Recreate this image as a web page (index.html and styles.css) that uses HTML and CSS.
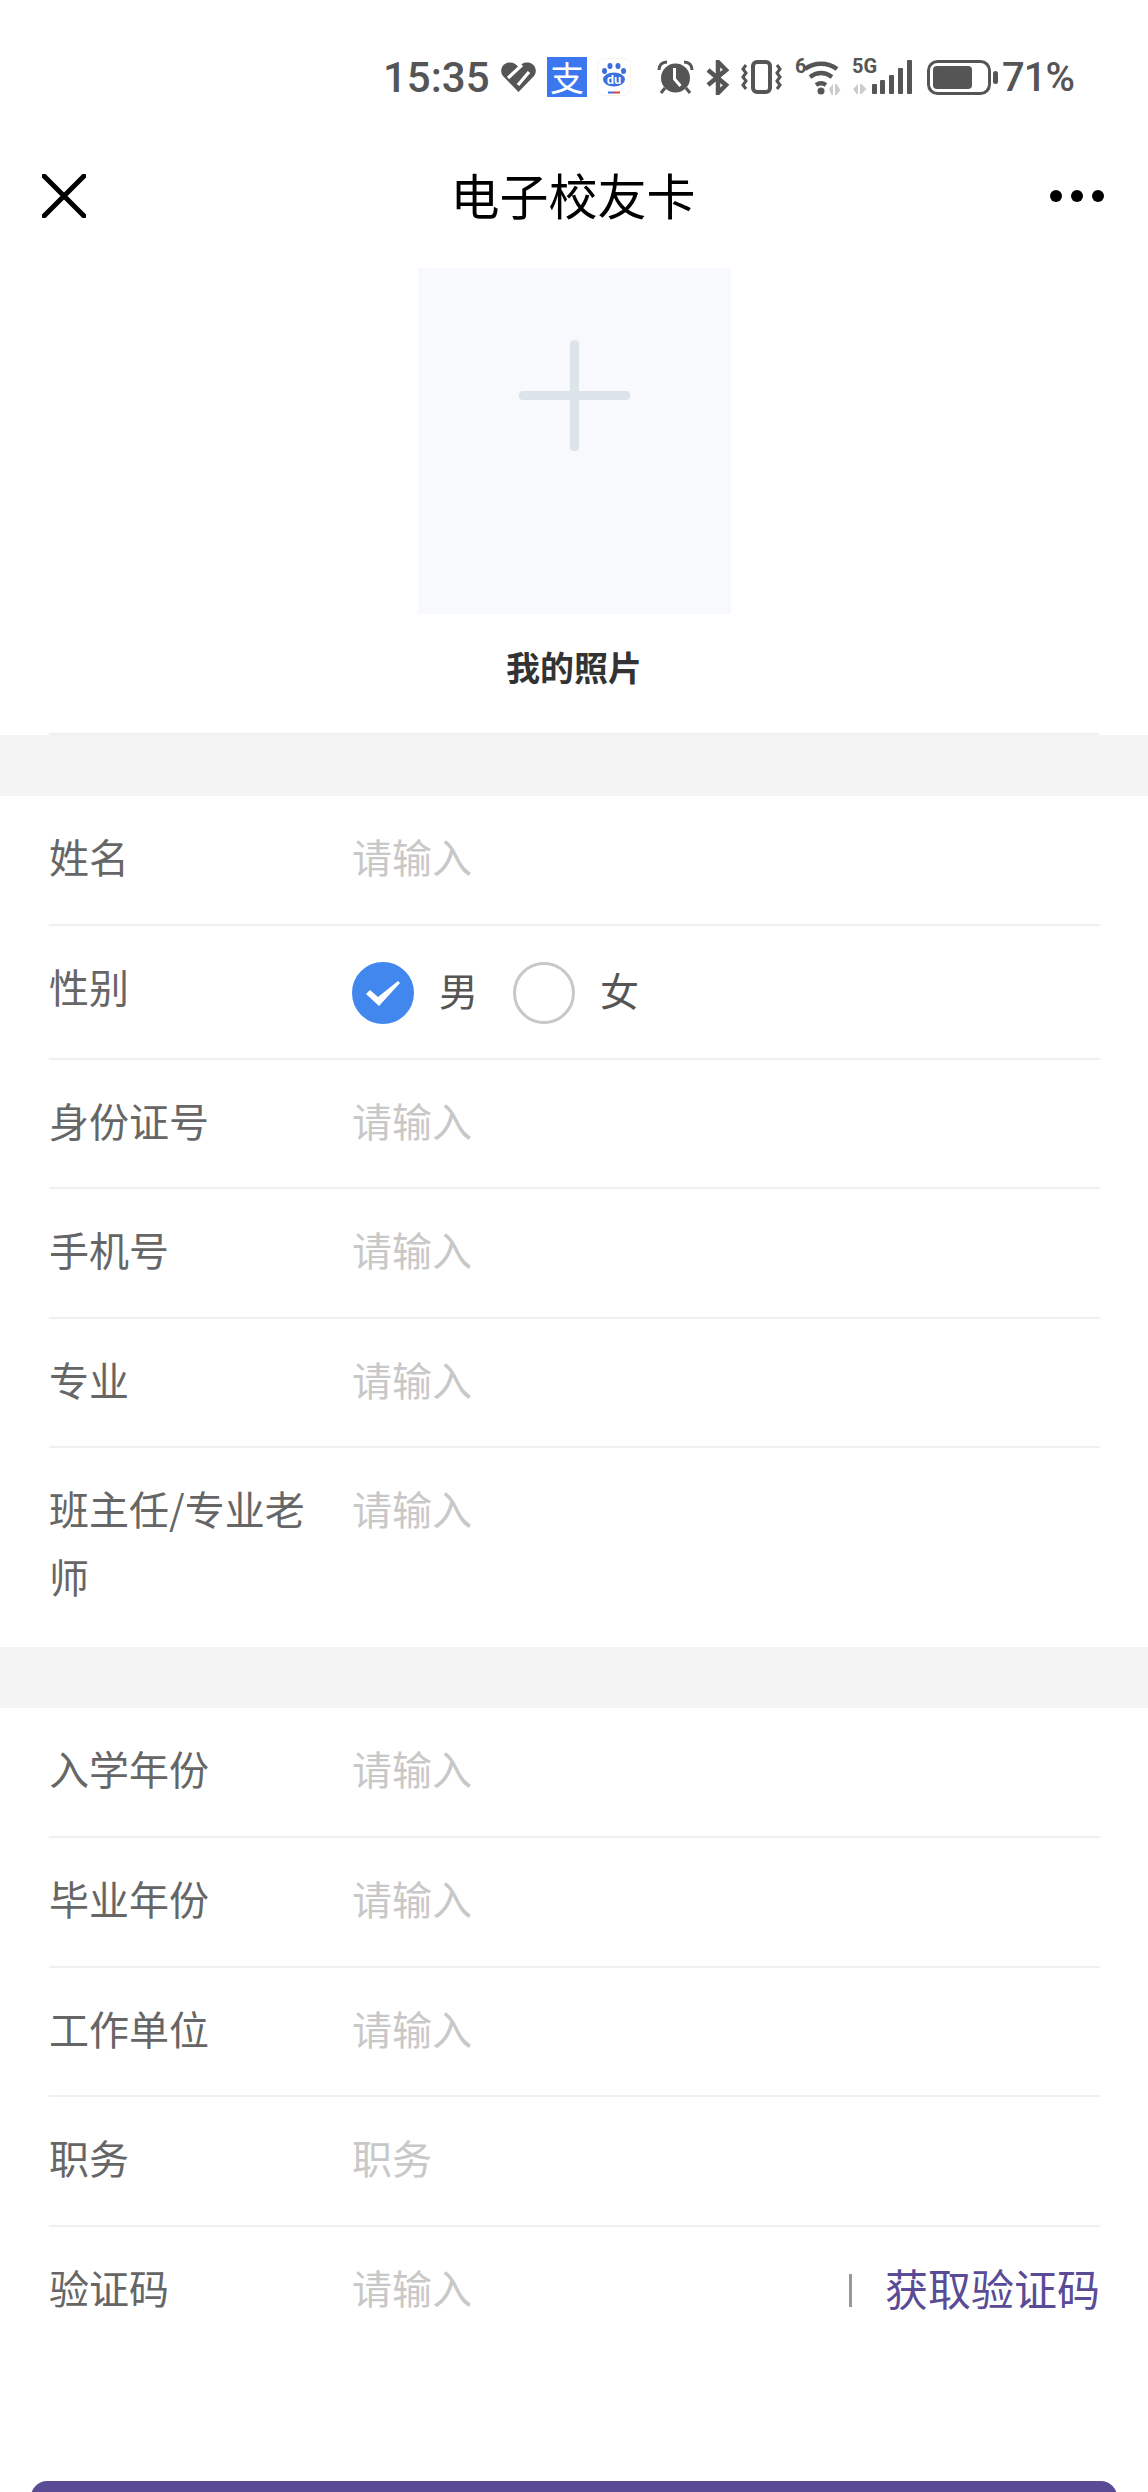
FILE: index.html
```html
<!DOCTYPE html>
<html lang="zh-CN">
<head>
    <meta charset="UTF-8">
    <meta name="viewport" content="width=device-width, initial-scale=1.0">
    <title>电子校友卡</title>
    <link rel="stylesheet" href="styles.css">
</head>
<body>
    <div class="status-bar">
        <span class="status-time">15:35</span>
        <svg class="ic-heart" width="35" height="30" viewBox="0 0 35 30"><path d="M17.500 30 2 14C-2 9 1 1 8 .5c4-.5 7 1.500 9.500 4.500C20 2 23 0 27 .5c7 .5 10 8.500 6 13.500Z" fill="#555"/><path d="M7 16 21 3M17 23 28 10" stroke="#fff" stroke-width="3.200" fill="none"/></svg>
        <span class="ic-alipay">支</span>
        <svg class="ic-baidu" width="34" height="38" viewBox="0 0 34 38"><rect x="0.500" y="0.500" width="33" height="37" rx="7" fill="#fff" stroke="#f7f3ea"/><g fill="#3b6fe0"><ellipse cx="17" cy="21.500" rx="11" ry="7"/><ellipse cx="7.500" cy="13" rx="2.500" ry="3"/><ellipse cx="13" cy="8" rx="2.500" ry="3"/><ellipse cx="21" cy="8" rx="2.500" ry="3"/><ellipse cx="26.500" cy="13" rx="2.500" ry="3"/></g><text x="17" y="26" class="baidu-du">du</text><rect x="11" y="33.500" width="6" height="2" fill="#3b6fe0"/><rect x="17" y="33.500" width="6" height="2" fill="#d8443c"/></svg>
        <svg class="ic-alarm" width="37" height="34" viewBox="0 0 37 34"><circle cx="18.500" cy="18" r="14.500" fill="#555"/><path d="M17.500 8v11l6 7" stroke="#fff" stroke-width="3" fill="none"/><path d="M2 10C2 5 5 2 10 2M35 10c0-5-3-8-8-8" fill="none" stroke="#555" stroke-width="3"/><path d="m8 28-4 5M29 28l4 5" stroke="#555" stroke-width="3"/></svg>
        <svg class="ic-bt" width="24" height="35" viewBox="0 0 24 35"><path d="M2 10 20 25l-8 8V2l8 8L2 25" fill="none" stroke="#555" stroke-width="4.500"/></svg>
        <svg class="ic-vibrate" width="41" height="34" viewBox="0 0 41 34"><rect x="12" y="2" width="17" height="30" rx="4" fill="none" stroke="#555" stroke-width="4"/><path d="M5 5 2 9l3 4-3 4 3 4-3 4 3 4M36 5l3 4-3 4 3 4-3 4 3 4-3 4" fill="none" stroke="#555" stroke-width="3"/></svg>
        <svg class="ic-wifi" width="48" height="50" viewBox="0 -6 48 50"><text x="0" y="15" class="net-label">6</text><path d="M10 11c9-7 23-7 32 0M15 19c7-5 15-5 22 0M21 27c3-2 7-2 10 0" fill="none" stroke="#555" stroke-width="4.500"/><circle cx="26" cy="33" r="3.500" fill="#555"/><path d="M34 31l4-5v11h-1.500zM40 26h1.500l4 6-4 5H40z" fill="#ccc"/></svg>
        <svg class="ic-signal" width="60" height="46" viewBox="0 -6 60 46"><text x="0" y="13" class="net-label">5G</text><path d="M1 29l5-5v10H4.500zM8 24h1.500l5 5-5 5H8z" fill="#ccc"/><g fill="#555"><rect x="20" y="24" width="5" height="10" rx="1"/><rect x="28" y="20" width="5" height="14" rx="1"/><rect x="37" y="15" width="5" height="19" rx="1"/><rect x="46" y="8" width="5" height="26" rx="1"/><rect x="55" y="0" width="5" height="34" rx="1"/></g></svg>
        <svg class="ic-battery" width="72" height="35" viewBox="0 0 72 35"><rect x="1.500" y="1.500" width="61" height="32" rx="9" fill="none" stroke="#555" stroke-width="3"/><rect x="6" y="6" width="39" height="23" rx="4" fill="#555"/><rect x="66" y="11" width="5" height="13" rx="2.500" fill="#555"/></svg>
        <span class="status-pct">71%</span>
    </div>

    <div class="nav">
        <svg class="nav-close" width="44" height="44" viewBox="0 0 44 44"><path d="M2 2 42 42M42 2 2 42" stroke="#000" stroke-width="5" stroke-linecap="round"/></svg>
        <h1 class="nav-title">电子校友卡</h1>
        <div class="nav-more"><i></i><i></i><i></i></div>
    </div>

    <div class="photo-section">
        <div class="photo-box">
            <svg class="plus" width="111" height="111" viewBox="0 0 111 111"><rect x="51" y="0" width="9" height="111" rx="4" fill="#dce3e9"/><rect x="0" y="51" width="111" height="9" rx="4" fill="#dce3e9"/></svg>
        </div>
        <p class="photo-label">我的照片</p>
    </div>

    <div class="form-group">
        <div class="row"><div class="label">姓名</div><div class="hint">请输入</div></div>
        <div class="row row-gender">
            <div class="label">性别</div>
            <div class="radios">
                <span class="radio checked">
                    <svg width="36" height="27" viewBox="0 0 36 27"><path d="M1 14l4-4 8 7L33 1l2 2-21 23z" fill="#fff"/></svg>
                </span>
                <span class="radio-text">男</span>
                <span class="radio"></span>
                <span class="radio-text">女</span>
            </div>
        </div>
        <div class="row"><div class="label">身份证号</div><div class="hint">请输入</div></div>
        <div class="row"><div class="label">手机号</div><div class="hint">请输入</div></div>
        <div class="row"><div class="label">专业</div><div class="hint">请输入</div></div>
        <div class="row row-last"><div class="label">班主任/专业老师</div><div class="hint">请输入</div></div>
    </div>

    <div class="form-group">
        <div class="row"><div class="label">入学年份</div><div class="hint">请输入</div></div>
        <div class="row"><div class="label">毕业年份</div><div class="hint">请输入</div></div>
        <div class="row"><div class="label">工作单位</div><div class="hint">请输入</div></div>
        <div class="row"><div class="label">职务</div><div class="hint">职务</div></div>
        <div class="row row-last">
            <div class="label">验证码</div>
            <div class="hint">请输入</div>
            <div class="get-code">获取验证码</div>
        </div>
    </div>

    <button class="submit" type="button"></button>
</body>
</html>
```

FILE: styles.css
```css
* {
    margin: 0;
    padding: 0;
    box-sizing: border-box;
}

html, body {
    height: 2492px;
    overflow: hidden;
}

body {
    font-family: "Noto Sans CJK SC", "Noto Sans", sans-serif;
    background-color: #fff;
    color: #666;
}

/* status bar */
.status-bar {
    height: 146px;
    padding: 8px 0 0 383px;
    display: flex;
    align-items: center;
    color: #555;
}

.status-time,
.status-pct {
    font-family: Roboto, sans-serif;
    font-size: 42px;
    font-weight: 500;
}

.status-time {
    width: 103px;
}

.status-pct {
    margin-left: 3px;
    font-size: 40px;
    letter-spacing: -1px;
}

.ic-heart { margin-left: 15px; }
.ic-baidu { margin-left: 10px; }
.ic-alarm { margin-left: 26px; }
.ic-bt { margin-left: 12px; }
.ic-vibrate { margin-left: 11px; }
.ic-wifi { margin-left: 13px; }
.ic-signal { margin-left: 9px; }
.ic-battery { margin-left: 15px; }

.ic-alipay {
    width: 40px;
    height: 40px;
    margin-left: 11px;
    background-color: #3b78f0;
    color: #fff;
    font-size: 34px;
    line-height: 40px;
    text-align: center;
}

.baidu-du {
    font-family: "Liberation Sans", sans-serif;
    font-size: 12px;
    font-weight: bold;
    fill: #fff;
    text-anchor: middle;
}

.net-label {
    font-family: Roboto, sans-serif;
    font-size: 20px;
    font-weight: 700;
    fill: #555;
}

/* nav */
.nav {
    height: 100px;
    padding: 0 44px 0 42px;
    display: grid;
    grid-template-columns: 1fr auto 1fr;
    align-items: center;
}

.nav-title {
    margin-bottom: 5px;
    font-size: 49px;
    font-weight: 400;
    color: #000;
}

.nav-more {
    display: flex;
    justify-content: flex-end;
    gap: 9px;
}

.nav-more i {
    width: 12px;
    height: 12px;
    border-radius: 50%;
    background-color: #000;
}

/* photo */
.photo-section {
    height: 489px;
    margin: 0 49px;
    padding-top: 22px;
    border-bottom: 2px solid #f0f0f0;
    text-align: center;
}

.photo-box {
    width: 313px;
    height: 346px;
    margin: 0 auto;
    padding-top: 72px;
    background-color: #f8f9fd;
}

.plus {
    display: block;
    margin: 0 auto;
}

.photo-label {
    margin-top: 29px;
    font-size: 34px;
    font-weight: 700;
    line-height: 48px;
    color: #333;
}

/* form */
.form-group {
    padding: 0 48px 0 49px;
    border-top: 61px solid #f4f4f4;
}

.row {
    display: flex;
    padding: 26px 0 33.6px;
    border-bottom: 2px solid #f0f0f0;
    font-size: 40px;
    line-height: 68px;
}

.row-gender {
    padding-bottom: 33.4px;
}

.row-last {
    border-bottom: 0;
    padding-bottom: 37px;
}

.label {
    flex: none;
    width: 280px;
    margin-right: 23px;
}

.hint {
    flex: 1;
    color: #c8c8c8;
}

.radios {
    display: flex;
    align-items: center;
    height: 62px;
    margin-top: 10.6px;
    color: #555;
    font-size: 39px;
    line-height: 1;
}

.radio {
    width: 62px;
    height: 62px;
    border: 3px solid #c8c8c8;
    border-radius: 50%;
    display: flex;
    align-items: center;
    justify-content: center;
}

.radio.checked {
    border-color: #4287ee;
    background-color: #4287ee;
}

.radio-text {
    margin: 0 35px 8px 25px;
}

.get-code {
    padding-left: 36px;
    font-size: 43px;
    color: #5a4b96;
    background: linear-gradient(#999, #999) left 21px / 3px 33px no-repeat;
}

.submit {
    display: block;
    width: 1086px;
    height: 96px;
    margin: 123px 0 0 31px;
    border: none;
    border-radius: 16px;
    background-color: #5a4b96;
}
```
